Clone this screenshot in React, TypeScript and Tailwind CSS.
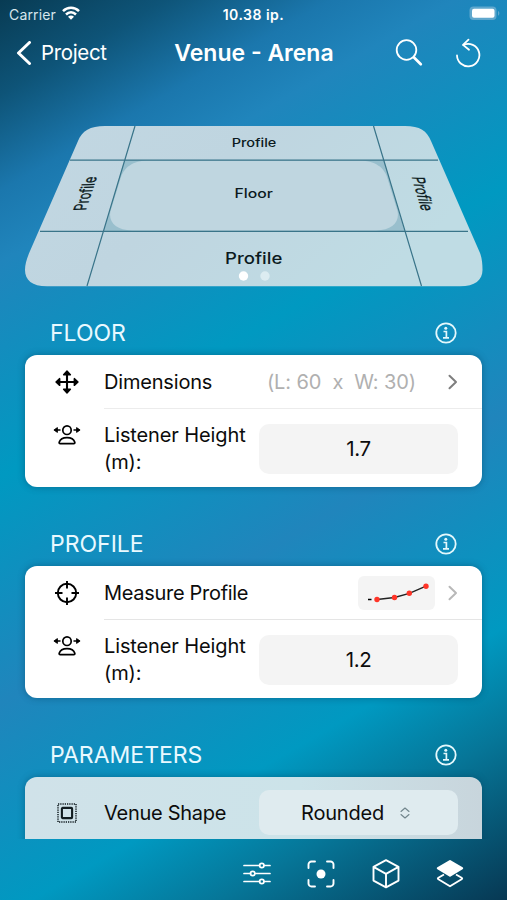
import type { ReactNode } from "react";

type SectionProps = {
    title: string;
    children: ReactNode;
};

function InfoIcon() {
    return (
        <svg width="22" height="22" viewBox="0 0 22 22" fill="none" stroke="#e4f8fc" strokeWidth="1.8">
            <circle cx="11" cy="11" r="9.7" />
            <circle cx="10.8" cy="6.2" r="1.5" fill="#e4f8fc" stroke="none" />
            <path d="M8.5 9.5h2.9v6.2M8 15.8h6" strokeWidth="1.7" />
        </svg>
    );
}

function MoveIcon() {
    return (
        <svg width="24" height="24" viewBox="0 0 24 24" fill="none" stroke="black" strokeWidth="2.1">
            <path d="M12 3v18M3 12h18" />
            <path
                d="M12 1l3.400 3.700H8.600zM12 23l3.400-3.700H8.600zM1 12l3.700-3.400v6.800zM23 12l-3.700-3.400v6.800z"
                fill="black"
                strokeWidth="1.4"
                strokeLinejoin="round"
            />
        </svg>
    );
}

function ListenerIcon() {
    return (
        <svg width="28" height="22" viewBox="0 0 28 22" fill="none" stroke="black" strokeWidth="1.7">
            <ellipse cx="14" cy="5.200" rx="4.200" ry="4.300" />
            <path d="M7.200 18.600h13.600c.8 0 1.200-.6 1-1.300-.9-2.900-4.100-4.700-7.800-4.700s-6.900 1.800-7.800 4.700c-.2.7.2 1.300 1 1.300z" />
            <path d="M2 5h5.500M20.500 5H26" />
            <path d="M.9 5l3.500-2.400v4.800zM27.100 5l-3.500-2.400v4.800z" fill="black" strokeWidth=".9" strokeLinejoin="round" />
        </svg>
    );
}

function TargetIcon() {
    return (
        <svg width="24" height="24" viewBox="0 0 24 24" fill="none" stroke="black" strokeWidth="1.9">
            <circle cx="12" cy="12" r="9.2" />
            <path d="M12 0v7.5M12 16.5V24M0 12h7.5M16.5 12H24" />
        </svg>
    );
}

function ShapeIcon() {
    return (
        <svg width="20" height="20" viewBox="0 0 20 20" fill="none" stroke="#111c20">
            <rect x="1" y="1" width="18" height="18" strokeWidth="1.5" strokeDasharray="1.25 1" />
            <rect x="4.9" y="4.9" width="10.2" height="10.2" rx=".8" strokeWidth="2.1" />
        </svg>
    );
}

function Chevron({ color }: { color: string }) {
    return (
        <svg width="10" height="16" viewBox="0 0 10 16" fill="none" stroke={color} strokeWidth="2">
            <path d="M1.500 1.800L8 8l-6.500 6.200" strokeLinecap="round" strokeLinejoin="round" />
        </svg>
    );
}

// small preview of the measured profile points
function ProfilePreview() {
    const points = [
        [19, 23.5],
        [36.5, 21.5],
        [51.3, 17.3],
        [68, 10.2],
    ];
    return (
        <svg width="77" height="34" viewBox="0 0 77 34" className="rounded-md bg-[#f4f4f4]">
            <path d="M10 23.5h3.5" stroke="black" strokeWidth="1.4" />
            <polyline
                points={points.map((p) => p.join(",")).join(" ")}
                fill="none"
                stroke="#222"
                strokeWidth="1.4"
            />
            {points.map(([x, y]) => (
                <circle key={x} cx={x} cy={y} r="2.7" fill="#ff3528" />
            ))}
        </svg>
    );
}

// perspective drawing of the venue: floor in the middle, profiles around it
function VenueDrawing() {
    return (
        <svg
            width="507"
            height="170"
            viewBox="0 120 507 170"
            fontFamily="Inter, sans-serif"
            fontWeight="500"
            fill="#0b1a20"
            textAnchor="middle"
        >
            <defs>
                <linearGradient id="slab" x1="0" y1="0" x2="1" y2="0.4">
                    <stop offset="0" stopColor="#c2d7e2" />
                    <stop offset="0.45" stopColor="#bfd5e0" />
                    <stop offset="1" stopColor="#bfdce4" />
                </linearGradient>
            </defs>
            <path
                d="M105 126H405C420 126 427 131 431 141L480 253C482 258 482.500 264 482.500 270C482.500 280 475 286.300 460 286.300H47C32 286.300 25 280 25 270C25 264 27 258 30 251L78 141C82 131 90 126 105 126Z"
                fill="url(#slab)"
            />
            <path d="M124.500 160H384L404.500 231H103.500Z" fill="#99bfcd" />
            <path
                d="M149 160.500H358C376 160.500 384 168 387 177L397.500 211C400 222 392 230.500 376 230.500H132C116 230.500 108 222 110.500 211L121 177C124 168 132 160.500 149 160.500Z"
                fill="#bfd6e0"
            />
            <path
                d="M70 160.200H438M40 231.300H468M135 126L87 286M373.500 126L421.500 286"
                fill="none"
                stroke="#397489"
                strokeWidth="1.2"
            />
            <text transform="translate(254 146.500) scale(1.26 1)" fontSize="11.500">Profile</text>
            <text transform="translate(253.700 197.500) scale(1.24 1)" fontSize="12.700">Floor</text>
            <text transform="translate(253.700 263.500) scale(1.16 1)" fontSize="16">Profile</text>
            <text
                transform="matrix(.34 -1.02 1.600 -.05 91.500 193.500)"
                fontSize="11"
                fontWeight="400"
                stroke="#0b1a20"
                strokeWidth=".2"
            >
                Profile
            </text>
            <text
                transform="matrix(.3 1.020 -1.600 -.05 416.500 193.500)"
                fontSize="11"
                fontWeight="400"
                stroke="#0b1a20"
                strokeWidth=".2"
            >
                Profile
            </text>
            <circle cx="243.500" cy="276" r="4.700" fill="white" />
            <circle cx="265" cy="276" r="4.700" fill="#dcecf1" />
        </svg>
    );
}

function Section({ title, children }: SectionProps) {
    return (
        <section>
            <div className="flex h-11 items-center justify-between pr-[25px] pl-[25px]">
                <h2 className="text-[23px] leading-none text-[#e9f9ff]">{title}</h2>
                <InfoIcon />
            </div>
            {children}
        </section>
    );
}

function ListenerRow({ value }: { value: string }) {
    return (
        <div className="flex pr-6">
            <div className="w-[79px] shrink-0 pt-4 pl-7">
                <ListenerIcon />
            </div>
            <p className="w-[155px] shrink-0 pt-[13px] text-[20px] leading-[27px] tracking-[-0.12px]">
                Listener Height (m):
            </p>
            <div className="mt-[15px] flex h-[50px] flex-1 items-center justify-center rounded-[10px] bg-[#f4f4f4] text-[20.5px] tracking-[-0.4px]">
                {value}
            </div>
        </div>
    );
}

export default function App() {
    return (
        <div className="flex h-[900px] w-[507px] flex-col overflow-hidden bg-[linear-gradient(150deg,#083b53_0%,#0e5478_8%,#1b77ad_16%,#2085bc_22%,#0099c1_40%,#2085bc_59%,#0099c1_77%,#067698_86%,#073853_100%)] font-[Inter,sans-serif] text-[#0c0c0c]">
            {/* status bar */}
            <div className="grid h-7 grid-cols-3 items-center px-[9px] text-[14px] text-white">
                <div className="flex items-center gap-1.5">
                    <span className="tracking-[0.15px] text-[#d7e6ed]">Carrier</span>
                    <svg className="-mt-0.5" width="18" height="14" viewBox="0 0 18 14" fill="none" stroke="white" strokeWidth="2.5">
                        <path d="M1 5.200C5.500.7 12.500.7 17 5.200M4 8.500c3-2.900 7-2.900 10 0" />
                        <path d="M9 13.800L6 10.800c1.700-1.600 4.300-1.600 6 0z" fill="white" stroke="none" />
                    </svg>
                </div>
                <span className="text-center font-semibold tracking-[0.5px]">10.38 ip.</span>
                <svg className="-mt-0.5 -mr-0.5 justify-self-end" width="31" height="15" viewBox="0 0 31 15">
                    <rect x=".5" y=".5" width="27" height="13.500" rx="4" fill="#5fa7cd" />
                    <rect x="3" y="2.700" width="22.500" height="9" rx="2" fill="white" />
                    <path d="M29 5c1.800.7 1.800 4 0 4.700z" fill="#5fa7cd" />
                </svg>
            </div>

            {/* navigation */}
            <header className="grid h-[50px] grid-cols-3 items-center px-4 text-white">
                <div className="flex items-center gap-[9px]">
                    <svg width="16" height="24" viewBox="0 0 16 24" fill="none" stroke="white" strokeWidth="3">
                        <path d="M13.500 1.500L2.500 12l11 10.500" strokeLinecap="round" strokeLinejoin="round" />
                    </svg>
                    <span className="text-[20.5px] tracking-[-0.35px]">Project</span>
                </div>
                <h1 className="text-center text-[23px] font-semibold whitespace-nowrap">Venue - Arena</h1>
                <div className="flex items-center justify-end gap-8 pr-2.5">
                    <svg width="28" height="28" viewBox="0 0 28 28" fill="none" stroke="white">
                        <circle cx="11.500" cy="11" r="9.800" strokeWidth="1.800" />
                        <path d="M19 18.500l6.800 6.700" strokeWidth="2.700" strokeLinecap="round" />
                    </svg>
                    <svg
                        width="26"
                        height="30"
                        viewBox="0 0 26 30"
                        fill="none"
                        stroke="white"
                        strokeWidth="1.800"
                        strokeLinecap="round"
                    >
                        <path d="M2 17.500A11.200 11.200 0 1 0 8.500 7" />
                        <path d="M13.500 1.700L8 6.900l6 4.900" strokeLinejoin="round" />
                    </svg>
                </div>
            </header>

            <div className="mt-[42px] shrink-0">
                <VenueDrawing />
            </div>

            <main className="flex h-[549px] shrink-0 flex-col gap-[35px] overflow-hidden px-[25px] pt-[21px]">
                <Section title="FLOOR">
                    <div className="h-[132px] rounded-xl bg-white shadow-[0_0_7px_rgba(0,60,90,.45)]">
                        <div className="flex h-[53px] items-center pr-6">
                            <div className="w-[79px] shrink-0 pl-[30px]">
                                <MoveIcon />
                            </div>
                            <span className="flex-1 text-[20px] tracking-[-0.18px]">Dimensions</span>
                            <span className="mr-8 text-[20px] tracking-[-0.1px] whitespace-pre text-[#b0b0b0]">
                                {"(L: 60  x  W: 30)"}
                            </span>
                            <Chevron color="#7e7e7e" />
                        </div>
                        <div className="ml-[79px] h-px bg-[#ececec]" />
                        <ListenerRow value="1.7" />
                    </div>
                </Section>

                <Section title="PROFILE">
                    <div className="h-[132px] rounded-xl bg-white shadow-[0_0_7px_rgba(0,60,90,.45)]">
                        <div className="flex h-[53px] items-center pr-6">
                            <div className="w-[79px] shrink-0 pl-[30px]">
                                <TargetIcon />
                            </div>
                            <span className="flex-1 text-[20px] tracking-[-0.3px]">Measure Profile</span>
                            <div className="mr-[13px]">
                                <ProfilePreview />
                            </div>
                            <Chevron color="#b8b8b8" />
                        </div>
                        <div className="ml-[79px] h-px bg-[#e5e5e5]" />
                        <ListenerRow value="1.2" />
                    </div>
                </Section>

                <Section title="PARAMETERS">
                    <div className="flex h-[132px] items-start rounded-t-xl bg-[linear-gradient(90deg,#d0e2e9,#cce3e9_60%,#c8d5dc)] pr-6 shadow-[0_0_7px_rgba(0,60,90,.45)]">
                        <div className="flex h-[71px] w-[79px] shrink-0 items-center pl-8">
                            <ShapeIcon />
                        </div>
                        <span className="flex h-[71px] w-[155px] shrink-0 items-center text-[20px] tracking-[-0.28px]">
                            Venue Shape
                        </span>
                        <div className="mt-[13px] flex h-[45px] flex-1 items-center justify-center gap-4 rounded-[10px] bg-[#dfebef] pr-1.5 text-[20px] tracking-[-0.2px]">
                            Rounded
                            <svg width="10" height="12" viewBox="0 0 10 12" fill="none" stroke="#71858c" strokeWidth="1.100">
                                <path d="M1 4.500L5 1l4 3.500M1 7.500L5 11l4-3.500" strokeLinecap="round" strokeLinejoin="round" />
                            </svg>
                        </div>
                    </div>
                </Section>
            </main>

            {/* tab bar */}
            <nav className="flex h-[61px] shrink-0 items-center justify-end gap-[36.5px] pt-2 pr-[43px]">
                <svg width="28" height="28" viewBox="0 0 28 28" fill="none" stroke="white" strokeWidth="1.700">
                    <path d="M1 5.500h15.500M21 5.500h6M1 13.500h6.500M12 13.500h15M1 21.500h15.500M21 21.500h6" strokeLinecap="round" />
                    <circle cx="18.800" cy="5.500" r="2.200" />
                    <circle cx="9.700" cy="13.500" r="2.200" />
                    <circle cx="18.800" cy="21.500" r="2.200" />
                </svg>
                <svg width="28" height="28" viewBox="0 0 28 28" fill="none" stroke="white" strokeWidth="1.900">
                    <path
                        d="M1.500 8V4.500a3 3 0 0 1 3-3H8M20 1.500h3.500a3 3 0 0 1 3 3V8M26.500 20v3.500a3 3 0 0 1-3 3H20M8 26.500H4.500a3 3 0 0 1-3-3V20"
                        strokeLinecap="round"
                    />
                    <circle cx="14" cy="14" r="4.500" fill="white" stroke="none" />
                </svg>
                <svg
                    width="28"
                    height="30"
                    viewBox="0 0 28 30"
                    fill="none"
                    stroke="white"
                    strokeWidth="1.900"
                    strokeLinejoin="round"
                >
                    <path d="M14 1.200l12.500 6.700v13.700L14 28.300 1.500 21.600V7.900zM1.500 7.900L14 14.800l12.500-6.900M14 14.800v13.500" />
                </svg>
                <svg width="28" height="30" viewBox="0 0 28 30" fill="none" stroke="white" strokeWidth="1.900">
                    <path d="M14 2.300l12 6.900-12 7.300L2 9.200z" fill="white" strokeWidth="2.400" strokeLinejoin="round" />
                    <path d="M8 15.500l-5.600 3.300q-1.200.7 0 1.400L14 27.200l11.600-7q1.200-.7 0-1.400L20 15.500" strokeLinejoin="round" />
                </svg>
            </nav>
        </div>
    );
}
